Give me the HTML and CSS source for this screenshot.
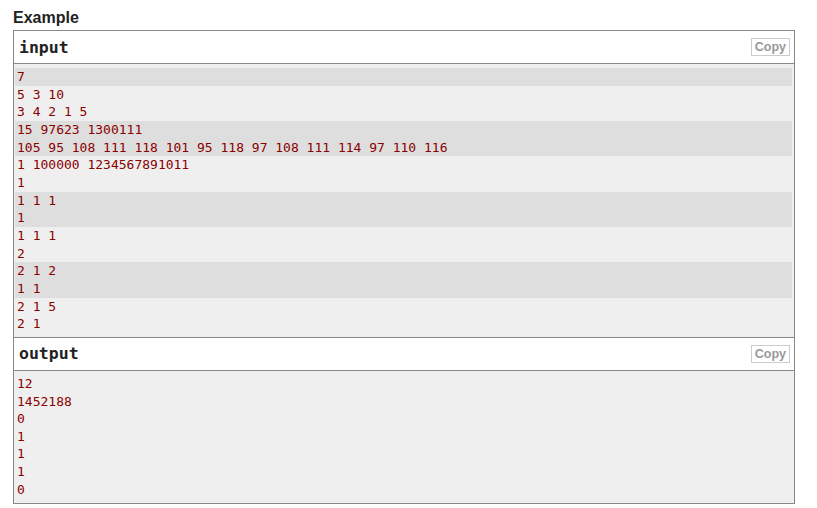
FILE: index.html
```html
<!DOCTYPE html>
<html>
<head>
<meta charset="utf-8">
<link rel="stylesheet" href="styles.css">
</head>
<body>
<div class="sample">
  <div class="section-title">Example</div>
  <div class="sample-test">
    <div class="input">
      <div class="title">input<span class="copy">Copy</span></div>
      <pre class="pre"><div class="line odd">7</div><div class="line">5 3 10</div><div class="line">3 4 2 1 5</div><div class="line odd">15 97623 1300111</div><div class="line odd">105 95 108 111 118 101 95 118 97 108 111 114 97 110 116</div><div class="line">1 100000 1234567891011</div><div class="line">1</div><div class="line odd">1 1 1</div><div class="line odd">1</div><div class="line">1 1 1</div><div class="line">2</div><div class="line odd">2 1 2</div><div class="line odd">1 1</div><div class="line">2 1 5</div><div class="line">2 1</div></pre>
    </div>
    <div class="output">
      <div class="title">output<span class="copy">Copy</span></div>
      <pre class="pre"><div class="line">12</div><div class="line">1452188</div><div class="line">0</div><div class="line">1</div><div class="line">1</div><div class="line">1</div><div class="line">0</div></pre>
    </div>
  </div>
</div>
</body>
</html>
```

FILE: styles.css
```css
html, body {
  margin: 0;
  padding: 0;
  background: #fff;
}
.sample {
  padding: 8px 22px 0 13px;
}
.section-title {
  font-family: "Liberation Sans", Arial, sans-serif;
  font-weight: bold;
  font-size: 16px;
  line-height: 20px;
  color: #222;
  margin-bottom: 2px;
}
.sample-test {
  border: 1px solid #888;
  width: 780px;
}
.title {
  display: flex;
  justify-content: space-between;
  align-items: center;
  background: #fff;
  padding: 4px 5px 4px 5px;
  height: 24px;
  font-family: "DejaVu Sans Mono", monospace;
  font-weight: bold;
  font-size: 16.5px;
  color: #222;
  border-bottom: 1px solid #888;
}
.output .title {
  border-top: 1px solid #888;
}
.copy {
  font-family: "Liberation Sans", Arial, sans-serif;
  font-size: 12.5px;
  font-weight: bold;
  color: #999;
  border: 1px solid #ccc;
  padding: 0 3px;
  line-height: 16px;
  margin-right: -1px;
}
.pre {
  margin: 0;
  background: #efefef;
  padding: 4px 2px 4px 1px;
  font-family: "DejaVu Sans Mono", monospace;
  font-size: 13px;
  color: #8b0000;
}
.output .pre {
  padding-top: 4px;
  padding-bottom: 5px;
}
.line {
  height: 17.67px;
  line-height: 17.67px;
  padding-left: 2px;
}
.line.odd {
  background: #dedede;
}
```
